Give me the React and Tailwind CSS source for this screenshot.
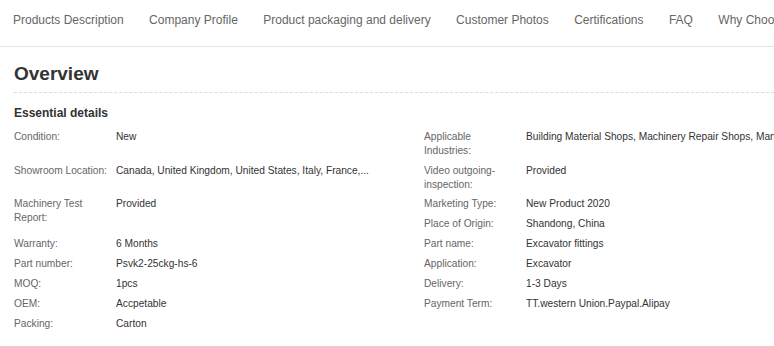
// App.jsx
const tabs = [
  'Products Description',
  'Company Profile',
  'Product packaging and delivery',
  'Customer Photos',
  'Certifications',
  'FAQ',
  'Why Choose Us',
];

const Cell = ({ label, value, className = 'pb-[6px]' }) => (
  <div className={`flex leading-[14px] ${className}`}>
    <div className="w-[102px] shrink-0 pr-[7px] text-[#666]">{label}</div>
    <div className="whitespace-nowrap text-[#333]">{value}</div>
  </div>
);

const App = () => {
  return (
    <div className="w-[774px] h-[346px] overflow-hidden bg-white font-['Liberation_Sans',Arial,sans-serif]">
      <div className="flex h-[47px] items-center whitespace-nowrap border-b border-[#e3e3e3] pl-[13px] pb-[6px] text-[12px] text-[#666]">
        {tabs.map((tab) => (
          <span key={tab} className="mr-[25.4px] shrink-0">{tab}</span>
        ))}
      </div>

      <div className="pl-[14px]">
        <h2 className="mt-[15px] border-b border-dashed border-[#dcdcdc] pb-[6px] text-[19px] font-bold leading-[24px] text-[#333]">
          Overview
        </h2>
        <h3 className="mt-[12px] text-[12px] font-bold leading-[16px] text-[#333]">Essential details</h3>

        <div className="mt-[9px] grid grid-cols-[410px_410px] text-[10.2px]">
          <Cell label="Condition:" value="New" />
          <Cell label="Applicable Industries:" value="Building Material Shops, Machinery Repair Shops, Manufacturing Plant" />
          <Cell label="Showroom Location:" value="Canada, United Kingdom, United States, Italy, France,..." className="pb-[5px]" />
          <Cell label="Video outgoing-inspection:" value="Provided" className="pb-[5px]" />
          <Cell label="Machinery Test Report:" value="Provided" className="row-span-2 pb-[6px]" />
          <Cell label="Marketing Type:" value="New Product 2020" />
          <Cell label="Place of Origin:" value="Shandong, China" />
          <Cell label="Warranty:" value="6 Months" />
          <Cell label="Part name:" value="Excavator fittings" />
          <Cell label="Part number:" value="Psvk2-25ckg-hs-6" />
          <Cell label="Application:" value="Excavator" />
          <Cell label="MOQ:" value="1pcs" />
          <Cell label="Delivery:" value="1-3 Days" />
          <Cell label="OEM:" value="Accpetable" />
          <Cell label="Payment Term:" value="TT.western Union.Paypal.Alipay" />
          <Cell label="Packing:" value="Carton" />
        </div>
      </div>
    </div>
  );
};

export default App;
